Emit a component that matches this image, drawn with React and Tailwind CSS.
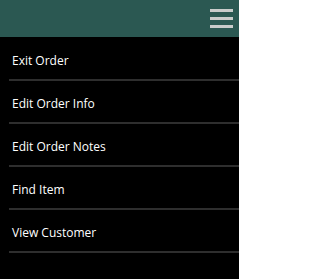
export default function App() {
  const items = ["Exit Order", "Edit Order Info", "Edit Order Notes", "Find Item", "View Customer"];
  return (
    <div className="h-[279px] w-[239px] bg-black font-['Open_Sans',sans-serif] text-white">
      <div className="flex h-[37px] items-start justify-end bg-[#2b5852] pr-[6px] pt-[9px]">
        <div className="flex w-[23px] flex-col gap-[5px]">
          <span className="h-[3px] bg-[#c9cccb]" />
          <span className="h-[3px] bg-[#c9cccb]" />
          <span className="h-[3px] bg-[#c9cccb]" />
        </div>
      </div>
      <ul className="pl-[9px] pt-[1px]">
        {items.map((t) => (
          <li key={t} className="flex h-[43px] items-center border-b-2 border-[#2e2e2e] pl-[3px] pt-[4px] text-[12px]">
            {t}
          </li>
        ))}
      </ul>
    </div>
  );
}
